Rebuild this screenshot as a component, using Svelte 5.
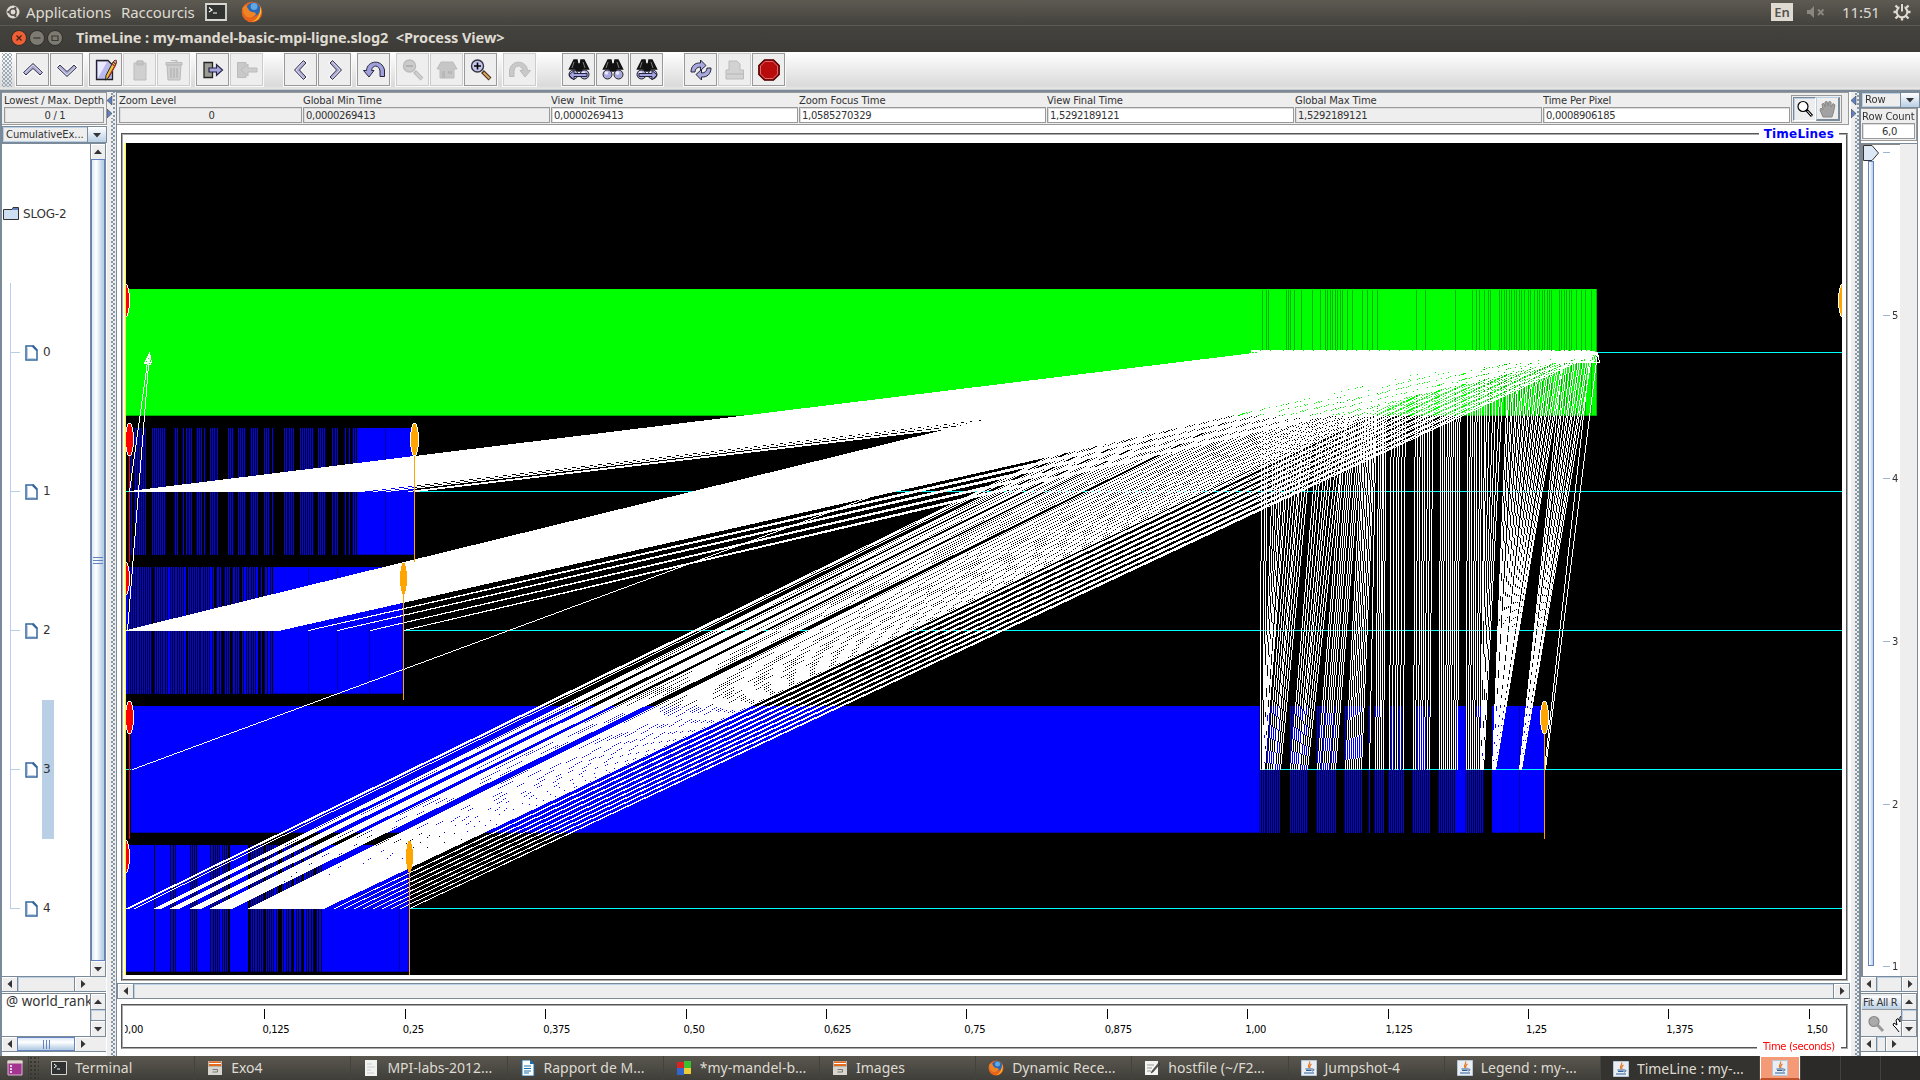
<script>
  import { onMount } from 'svelte';

  const OX = 125;
  const OY = 143;
  const W = 1717;
  const H = 832;
  let canvas;

  const tools = [
    { i: 'up' }, { i: 'down' }, { i: 'edit', g: 6 }, { i: 'paste', off: true, g: 1 }, { i: 'trash', off: true },
    { i: 'expand', g: 6 }, { i: 'collapse', off: true }, { i: 'left', g: 21 }, { i: 'right' },
    { i: 'undo', g: 6 }, { i: 'zoomout', off: true, g: 6 }, { i: 'home', off: true }, { i: 'zoomin' },
    { i: 'redo', off: true, g: 6 }, { i: 'findb', g: 26 }, { i: 'find' }, { i: 'findf' },
    { i: 'refresh', g: 21 }, { i: 'print', off: true }, { i: 'stop' }
  ];

  const fields = [
    { l: 'Zoom Level', v: '0', w: 183, ro: true, c: true },
    { l: 'Global Min Time', v: '0,0000269413', w: 247, ro: true },
    { l: 'View  Init Time', v: '0,0000269413', w: 247 },
    { l: 'Zoom Focus Time', v: '1,0585270329', w: 247 },
    { l: 'View Final Time', v: '1,5292189121', w: 247 },
    { l: 'Global Max Time', v: '1,5292189121', w: 247, ro: true },
    { l: 'Time Per Pixel', v: '0,0008906185', w: 247 }
  ];

  const axis = ['0,00', '0,125', '0,25', '0,375', '0,50', '0,625', '0,75', '0,875', '1,00', '1,125', '1,25', '1,375', '1,50'];
  const ranks = ['0', '1', '2', '3', '4'];
  const rows = ['', '5', '4', '3', '2', '1'];

  const tasks = [
    { i: 'term', t: 'Terminal' }, { i: 'files', t: 'Exo4' }, { i: 'doc', t: 'MPI-labs-2012...' },
    { i: 'writer', t: 'Rapport de M...' }, { i: 'blocks', t: '*my-mandel-b...' }, { i: 'files', t: 'Images' },
    { i: 'fox', t: 'Dynamic Rece...' }, { i: 'gedit', t: 'hostfile (~/F2...' }, { i: 'java', t: 'Jumpshot-4' },
    { i: 'java', t: 'Legend : my-...' }, { i: 'java', t: 'TimeLine : my-...', on: true }
  ];

  // [first start, last start, first end, last end, count] for messages leaving rank 3
  const groups3 = [
    [1260, 1263, 1261, 1268, 3], [1262, 1264, 1276, 1297, 7], [1267, 1280, 1300, 1320, 8], [1290, 1307, 1324, 1353, 10],
    [1317, 1335, 1350, 1368, 9], [1345, 1361, 1366, 1378, 9], [1369, 1369, 1377, 1377, 1], [1375, 1383, 1379, 1386, 5],
    [1389, 1403, 1391, 1405, 6], [1413, 1429, 1415, 1433, 8], [1439, 1457, 1440, 1460, 10], [1466, 1480, 1467, 1485, 8],
    [1480, 1483, 1487, 1504, 6], [1492, 1495, 1508, 1565, 24], [1519, 1521, 1563, 1592, 12], [1544, 1545, 1590, 1597, 2]
  ];

  // [first start, last start, count] for messages leaving rank 4
  const groups4 = [[126, 128, 3], [134, 135, 1], [154, 160, 5], [170, 178, 7], [190, 200, 8], [210, 231, 15], [248, 323, 48]];

  onMount(() => {
    const ctx = canvas.getContext('2d');
    const img = ctx.createImageData(W, H);
    const buf = new Uint32Array(img.data.buffer);
    const rgb = (r, g, b) => ((255 << 24) | (b << 16) | (g << 8) | r) >>> 0;
    const BLACK = rgb(0, 0, 0), WHITE = rgb(255, 255, 255), GREEN = rgb(0, 255, 0), DGREEN = rgb(0, 178, 0);
    const BLUE = rgb(0, 0, 255), DBLUE = rgb(0, 0, 178), CYAN = rgb(0, 255, 255);
    const RED = rgb(255, 0, 0), ORANGE = rgb(255, 165, 0);
    buf.fill(BLACK);

    const dot = (x, y, c) => {
      x -= OX; y -= OY;
      if (x >= 0 && y >= 0 && x < W && y < H) buf[y * W + x] = c;
    };
    const rect = (x, y, w, h, c) => {
      for (let j = y; j < y + h; j++) for (let i = x; i < x + w; i++) dot(i, j, c);
    };
    const line = (x0, y0, x1, y1, c = WHITE) => {
      x0 = Math.round(x0); x1 = Math.round(x1); y0 = Math.round(y0); y1 = Math.round(y1);
      const dx = Math.abs(x1 - x0), dy = -Math.abs(y1 - y0);
      const sx = x0 < x1 ? 1 : -1, sy = y0 < y1 ? 1 : -1;
      let e = dx + dy;
      for (;;) {
        dot(x0, y0, c);
        if (x0 === x1 && y0 === y1) break;
        const e2 = 2 * e;
        if (e2 >= dy) { e += dy; x0 += sx; }
        if (e2 <= dx) { e += dx; y0 += sy; }
      }
    };
    const arrow = (x0, y0, x1, y1) => {
      line(x0, y0, x1, y1);
      const a = Math.atan2(y1 - y0, x1 - x0);
      const bx = x1 - 10 * Math.cos(a), by = y1 - 10 * Math.sin(a);
      const px = -3 * Math.sin(a), py = 3 * Math.cos(a);
      line(x1, y1, bx + px, by + py);
      line(x1, y1, bx - px, by - py);
      line(bx + px, by + py, bx - px, by - py);
    };
    const oval = (cx, cy, c, ring = true) => {
      for (let j = -16; j <= 16; j++) {
        const o = Math.round(4 * Math.sqrt(Math.max(0, 1 - (j * j) / 272)));
        const n = Math.min(3, o - 1);
        if (ring) for (let i = -o; i <= o; i++) dot(cx + i, cy + j, WHITE);
        if (Math.abs(j) < 16) for (let i = -n; i <= n; i++) dot(cx + i, cy + j, c);
      }
    };
    const bar = (x, y, w, c, d) => {
      rect(x, y, w, 127, c);
      rect(x, y + 126, w, 1, d);
      rect(x + w - 1, y, 1, 127, d);
    };

    for (const y of [352, 491, 630, 769, 908]) rect(OX, y, W, 1, CYAN);

    // rank 0
    bar(126, 289, 1471, GREEN, DGREEN);
    for (const v of [187, 199, 205, 259, 265, 271, 283, 304, 337, 361, 376, 382, 391, 397, 406, 412, 421, 427, 442, 457,
      487, 502, 517, 532, 649, 676, 766, 817, 829, 838, 853, 865, 871, 898, 904, 913, 919, 928, 934, 943, 949, 958, 964,
      973, 985, 991, 1003, 1012, 1018, 1027, 1033, 1042, 1048, 1054, 1078, 1084, 1093, 1099, 1108, 1114, 1129, 1144, 1156, 1174])
      rect(1200 + Math.floor(v / 3), 290, 1, 126, DGREEN);

    // rank 1
    for (const v of [394, 405, 411, 418, 424, 430, 436, 457, 463, 469, 475, 481, 487, 493, 526, 532, 550, 560, 568, 574,
      592, 598, 604, 613, 631, 637, 643, 652, 685, 691, 697, 715, 721, 727, 733, 754, 760, 766, 772, 793, 799, 805, 817,
      853, 859, 868, 874, 880, 901, 907, 913, 919, 925, 931, 937, 955, 961, 967, 973, 997, 1006, 1012, 1036, 1048, 1060, 1066])
      rect(Math.floor(v / 3), 428, 1, 127, BLUE);
    bar(357, 428, 58, BLUE, DBLUE);
    rect(385, 429, 1, 126, DBLUE);

    // rank 2
    rect(126, 567, 148, 127, BLUE);
    for (let x = 128, k = 0; x < 274; x += k % 7 === 4 || (k % 5 === 1 && x > 155) ? 3 : 2, k++) rect(x, 567, 1, 127, BLACK);
    for (const x of [152, 186, 199, 214, 222, 231, 239, 258, 262]) rect(x, 567, 2, 127, BLACK);
    bar(274, 567, 130, BLUE, DBLUE);
    for (const x of [308, 337, 369]) rect(x, 568, 1, 126, DBLUE);

    // rank 3
    bar(131, 706, 1129, BLUE, DBLUE);
    for (const [a, b] of groups3) for (let x = a; x <= b; x += 2) if (x < 1492) rect(x, 706, 1, 127, BLUE);
    for (const [a, b] of [[1456, 1466], [1492, 1520], [1520, 1545]]) bar(a, 706, b - a, BLUE, DBLUE);
    rect(1493, 769, 51, 1, CYAN);

    // rank 4
    bar(126, 845, 284, BLUE, DBLUE);
    const cuts = [463, 512, 519, 525, 570, 578, 584, 590, 632, 640, 646, 652, 658, 667, 673, 679, 685, 688, 745, 751, 757, 763,
      772, 778, 784, 790, 796, 802];
    for (let v = 808; v <= 964; v += v % 5 === 0 ? 9 : 6) cuts.push(v);
    for (const v of cuts) rect(Math.floor(v / 3), 845, 1, 127, BLACK);
    for (const x of [249, 263, 279, 291, 302, 314]) rect(x, 845, 2, 127, BLACK);
    rect(399, 846, 1, 126, DBLUE);

    // marker stems
    rect(129, 456, 1, 106, RED);
    rect(129, 733, 1, 106, RED);

    // messages from rank 1
    for (let k = 0; k < 92; k++) arrow(129 + (231 * k) / 91, 491, 1261 + (301 * k) / 91, 352);
    for (const [a, b] of [[373, 1575], [386, 1585], [408, 1592], [415, 1597]]) {
      arrow(a, 491, b, 352);
      arrow(a, 491, b - 4, 352);
    }

    // messages from rank 2
    for (let k = 0; k < 84; k++) arrow(126 + (152 * k) / 83, 630, 1261 + (248 * k) / 83, 352);
    for (const [a, b] of [[308, 1530], [337, 1552], [370, 1575], [403, 1597]])
      for (const d of [0, 5, 10, 15]) arrow(a, 630, b - d, 352);

    // messages from rank 3
    arrow(132, 769, 1261, 352);
    for (const [a, b, c, d, n] of groups3)
      for (let k = 0; k < n; k++) {
        const t = n > 1 ? k / (n - 1) : 0;
        arrow(a + (b - a) * t, 769, c + (d - c) * t, 352);
      }

    // messages from rank 4
    const s4 = [];
    for (const [a, b, n] of groups4) for (let k = 0; k < n; k++) s4.push(n > 1 ? a + ((b - a) * k) / (n - 1) : a);
    s4.forEach((x, k) => arrow(x, 908, 1261 + (236 * k) / (s4.length - 1), 352));
    [334, 344, 354, 363, 373, 382, 391, 400, 409].forEach((x, k) => {
      for (const d of [0, 3, 6]) arrow(x, 908, 1505 + 11.5 * k - d, 352);
    });

    // start-up messages
    arrow(129, 491, 148, 354);
    arrow(127, 630, 149, 352);

    rect(414, 455, 1, 107, ORANGE);
    rect(403, 594, 1, 106, ORANGE);
    rect(1544, 733, 1, 106, ORANGE);
    rect(409, 872, 1, 103, ORANGE);
    oval(125, 300, RED);
    oval(129, 439, RED);
    oval(125, 578, RED);
    oval(129, 717, RED);
    oval(125, 856, RED);
    oval(1842, 300, ORANGE);
    oval(414, 439, ORANGE);
    oval(403, 578, ORANGE, false);
    oval(1544, 717, ORANGE);
    oval(409, 856, ORANGE, false);
    rect(125, 143, 1, 832, rgb(255, 255, 0));
    ctx.putImageData(img, 0, 0);
  });
</script>

{#snippet tri(dir)}
  <svg class="tri {dir}" viewBox="0 0 8 8"><path d="M0 6L4 1.5L8 6Z" fill="#333" /></svg>
{/snippet}

{#snippet sbtn(dir)}
  <span class="sbtn">{@render tri(dir)}</span>
{/snippet}

{#snippet tool(i)}
  <svg viewBox="0 0 22 22" width="22" height="22">
    {#if i === 'up' || i === 'down' || i === 'left' || i === 'right'}
      <g class="rot-{i}">
        <path d="M1.5 14L11 5L20.5 14L18 16.500L11 10L4 16.500Z" fill="#a9a9d4" stroke="#fff" stroke-width="2" />
        <path d="M1.500 13.500L11 4.500L20.500 13.500L18 16L11 9.500L4 16Z" fill="#a9a9d0" stroke="#33334a" />
        <path d="M3 13.500L11 6L19 13.500" fill="none" stroke="#dcdcf2" />
      </g>
    {:else if i === 'edit'}
      <path d="M1.500 1.500H13L17.500 6V20.500H1.500Z" fill="#b9b9ee" stroke="#222" stroke-width="1.300" />
      <path d="M3 19L3 3H12Z" fill="#e9e9ff" />
      <path d="M18 3L21 5L14 18L10.500 21L11 16.500Z" fill="#e8c53a" stroke="#222" />
      <path d="M17 5L20 7L13.500 18" fill="none" stroke="#b03030" stroke-width="1.300" />
      <path d="M18 3L21 5L22 2L20 1Z" fill="#e09090" stroke="#633" />
    {:else if i === 'paste'}
      <path d="M5 4H8V2H14V4H17V21H5Z" fill="#cfcfcf" stroke="#bdbdbd" /><path d="M7 5H15M8 2H14V6H8Z" stroke="#bbb" fill="#c6c6c6" />
    {:else if i === 'trash'}
      <path d="M4 6H18L17 21H5ZM3 3.500H19V6H3ZM8 1.500H14V3" fill="#cfcfcf" stroke="#bbb" />
      <path d="M8 9V19M11 9V19M14 9V19" stroke="#aaa" />
    {:else if i === 'expand'}
      <path d="M2 3.500H10.500V18.500H2Z" fill="#9c9c94" stroke="#222" stroke-width="1.300" />
      <path d="M7 9H14.500V5.500L20.500 11L14.500 16.500V13H7Z" fill="#a6a6dc" stroke="#222244" stroke-width="1.200" />
    {:else if i === 'collapse'}
      <path d="M1.500 3.500H10V18.500H1.500Z" fill="#c9c9c9" stroke="#bbb" />
      <path d="M21 9H12V5L5 11L12 17V13H21Z" fill="#cdcdcd" stroke="#bbb" />
    {:else if i === 'undo' || i === 'redo'}
      <g class={i === 'redo' ? 'mirror' : ''}>
        <path d="M0.500 11.500H3.500C4 1.500 19 -0.500 21.500 11V17.500H17V12C16 5.500 9.500 5.500 8.500 11.500H11L6 18Z"
          fill={i === 'redo' ? '#c9c9c9' : '#a0a0dc'} stroke={i === 'redo' ? '#bbb' : '#26263a'} />
      </g>
    {:else if i === 'zoomout' || i === 'zoomin'}
      <path d="M12.500 12.500L20 20" stroke={i === 'zoomin' ? '#4a3218' : '#bbb'} stroke-width="4" />
      <path d="M13.500 13.500L19.500 19.500" stroke={i === 'zoomin' ? '#dba868' : '#d0d0d0'} stroke-width="1.800" />
      <circle cx="7.500" cy="7" r="6" fill={i === 'zoomin' ? '#c5c5ee' : '#ccc'} stroke={i === 'zoomin' ? '#333344' : '#bbb'} stroke-width="1.400" />
      <path d={i === 'zoomin' ? 'M4 7H11M7.500 3.500V10.500' : 'M4 7H11'} stroke={i === 'zoomin' ? '#000' : '#aaa'} stroke-width="1.600" />
    {:else if i === 'home'}
      <path d="M1 10L5 3H17L21 10H18V19H4V10Z" fill="#c6c6c6" stroke="#bcbcbc" /><path d="M6 12H9V19H6ZM12 12H16V15H12Z" fill="#b8b8b8" />
    {:else if i === 'find' || i === 'findb' || i === 'findf'}
      <path d="M6 1H9L10.500 10H1.500ZM13 1H16L20.500 10H11.500ZM8 5H14V12H8Z" fill="#161616" stroke="#111" stroke-width="1.500" />
      <path d="M6 3L4 9M15 3L17 9" stroke="#777" />
      <circle cx="5.500" cy="15.500" r="4.500" fill="#a8a8dc" stroke="#222" /><circle cx="16.500" cy="15.500" r="4.500" fill="#a8a8dc" stroke="#222" />
      <circle cx="4.500" cy="14" r="1.800" fill="#e8e8ff" /><circle cx="15.500" cy="14" r="1.800" fill="#e8e8ff" />
      {#if i !== 'find'}
        <path class={i === 'findf' ? 'mirror' : ''} d="M1 16L6 11.500V14.500H19V17.500H6V21Z" fill="#a3a3e0" stroke="#22223c" />
      {/if}
    {:else if i === 'refresh'}
      <path d="M1 13C1 7 5 3.500 10.500 4V1L16 6.500L10.500 11.500V8C7 8 5 10 5 13Z" fill="#a9a9dd" stroke="#26263a" />
      <path d="M21 9C21 15 17 18.500 11.500 18V21L6 15.500L11.500 10.500V14C15 14 17 12 17 9Z" fill="#a9a9dd" stroke="#26263a" />
    {:else if i === 'print'}
      <path d="M5 11V2H13L16 5V11H19.500V20H2V11Z" fill="#d2d2d2" stroke="#bbb" /><path d="M3 15H19" stroke="#b5b5b5" />
    {:else}
      <path d="M6.500 0.800H15.500L21.200 6.500V15.500L15.500 21.200H6.500L0.800 15.500V6.500Z" fill="#b80c0c" stroke="#4a0000" stroke-width="1.300" />
      <path d="M7 2.500H15L19.500 7V15L15 19.500H7L2.500 15V7Z" fill="none" stroke="#dd6a6a" />
    {/if}
  </svg>
{/snippet}

{#snippet app(i)}
  <svg viewBox="0 0 16 16" width="16" height="16">
    {#if i === 'term'}
      <path d="M0.500 1.500H15.500V14.500H0.500Z" fill="#2f3230" stroke="#d5d5d0" /><path d="M3 4L5.500 6L3 8M6 9H9" fill="none" stroke="#fff" />
    {:else if i === 'files'}
      <path d="M1 1H15V15H1Z" fill="#b9b5ab" /><path d="M2 1.500H14V6H2Z" fill="#e46a1c" /><path d="M2 3.500H14" stroke="#fff" />
      <path d="M1 7H15V15H1Z" fill="#d8d5ce" /><path d="M5.500 9.500H10.500V12H5.500" fill="none" stroke="#777" />
    {:else if i === 'doc'}
      <path d="M2 0H14V16H2Z" fill="#f2f2f0" /><path d="M4 4H9M4 7H12M4 10H8M4 13H11" stroke="#ccc" />
    {:else if i === 'writer'}
      <path d="M2 0H10L14 4V16H2Z" fill="#fff" stroke="#1b6fae" /><path d="M10 0V4H14Z" fill="#1b6fae" />
      <path d="M4 6H11M4 8.500H11M4 11H11M4 13H9" stroke="#1b6fae" />
    {:else if i === 'blocks'}
      <path d="M1 2H8V8H1Z" fill="#d22" /><path d="M8 1H15V8H8Z" fill="#38c030" /><path d="M1 8H8V15H1Z" fill="#36c" /><path d="M8 8H15V14H8Z" fill="#ec3" />
    {:else if i === 'fox'}
      <circle cx="8" cy="8" r="7.500" fill="#e8641b" /><circle cx="9" cy="6" r="5" fill="#2a66b4" /><circle cx="9.500" cy="4" r="2.500" fill="#5fa8e0" />
      <path d="M1 5C2 12 6 13 9 11C12 10 11 8 8 8C5 7 5 4 3 3Z" fill="#f08424" /><path d="M14 4C16 9 13 15 8 15C13 13 14 9 14 4Z" fill="#fbc52b" />
    {:else if i === 'gedit'}
      <path d="M1 1H14V15H1Z" fill="#f4f4f2" /><path d="M3 5H10M3 8H8M3 11H7" stroke="#999" /><path d="M14.500 3L8 11L7 13L9 12L16 4Z" fill="#555" stroke="#222" stroke-width=".5" />
    {:else}
      <path d="M0.500 0.500H15.500V15.500H0.500Z" fill="#e9eef4" stroke="#b9c6d6" />
      <path d="M8.500 1.500C10 4 5.500 5 8 8M10.500 4C8 5.500 8.500 6.500 9 8" fill="none" stroke="#e8771f" stroke-width="1.200" />
      <path d="M4.500 9H11.500M5 10.500H10.500M3 13H13M11.500 9C14 9 13 11 11 11" fill="none" stroke="#2f5f96" />
    {/if}
  </svg>
{/snippet}

<div class="screen">
  <header class="panel">
    <svg class="logo" viewBox="0 0 14 14"><circle cx="7" cy="7" r="6.500" fill="#dfdbd2" /><circle cx="7" cy="7" r="3.200" fill="none" stroke="#55534c" stroke-width="1.500" /><circle cx="2.500" cy="7" r="1.200" fill="#55534c" /><circle cx="9.300" cy="3" r="1.200" fill="#55534c" /><circle cx="9.300" cy="11" r="1.200" fill="#55534c" /></svg>
    <span class="apps">Applications</span>
    <span class="racc">Raccourcis</span>
    <svg class="pterm" viewBox="0 0 22 18"><path d="M1 1H21V17H1Z" fill="#30332f" stroke="#d8d8d4" stroke-width="1.800" /><path d="M4 4.500L7 7L4 9M8 10H12" fill="none" stroke="#fff" stroke-width="1.200" /></svg>
    <span class="pfox">{@render app('fox')}</span>
    <span class="grow"></span>
    <span class="kbd">En</span>
    <svg class="vol" viewBox="0 0 18 12"><path d="M0 4H3L7 0V12L3 8H0Z" fill="#8b887f" /><path d="M11 3.500L16.500 9M16.500 3.500L11 9" stroke="#8b887f" stroke-width="1.800" /></svg>
    <span class="clock">11:51</span>
    <svg class="gear" viewBox="0 0 18 18"><circle cx="9" cy="9" r="5.300" fill="none" stroke="#dfdbd2" stroke-width="2" /><path d="M2.500 2.500L5 5M15.500 2.500L13 5M2.500 15.500L5 13M15.500 15.500L13 13M0.500 9H3.500M14.500 9H17.500M9 14.500V17.500" stroke="#dfdbd2" stroke-width="2.400" /><path d="M6.500 0H11.500V8H6.500Z" fill="#4e4c46" /><path d="M9 1V8.500" stroke="#dfdbd2" stroke-width="2" /></svg>
  </header>

  <div class="title">
    <svg class="wins" viewBox="0 0 52 16">
      <circle cx="8" cy="8" r="7.500" fill="#ee5f35" stroke="#2f2e2a" /><path d="M5.500 5.500L10.500 10.500M10.500 5.500L5.500 10.500" stroke="#4b2314" stroke-width="1.300" />
      <circle cx="26" cy="8" r="7.500" fill="#7c7a71" stroke="#2f2e2a" /><path d="M22.500 8H29.500" stroke="#3a3934" stroke-width="1.300" />
      <circle cx="44" cy="8" r="7.500" fill="#7c7a71" stroke="#2f2e2a" /><path d="M41 6H47V10.500H41Z" fill="none" stroke="#3a3934" stroke-width="1.200" />
    </svg>
    <span class="tt">TimeLine : my-mandel-basic-mpi-ligne.slog2&nbsp; &lt;Process View&gt;</span>
  </div>

  <div class="toolbar">
    <span class="grip"></span>
    {#each tools as t}
      <span class="tb g{t.g ?? 1}" class:off={t.off}>{@render tool(t.i)}</span>
    {/each}
  </div>

  <main>
    <section class="left">
      <div class="box">
        <span class="lab">Lowest / Max. Depth</span>
        <span class="fld ro mid">0 / 1</span>
      </div>
      <div class="combo"><span class="ctext">CumulativeEx...</span><span class="cbtn">{@render tri('d')}</span></div>
      <div class="pane lp">
        <div class="tree">
          <div class="node root">
            <svg viewBox="0 0 16 13" width="16" height="13"><path d="M0.500 2.500H9L10 0.500H15.500V12.500H0.500Z" fill="#cfe0f2" stroke="#333" /><path d="M10 1H15V3H9Z" fill="#6382bf" /></svg>
            <span>SLOG-2</span>
          </div>
          {#each ranks as r}
            <div class="node leaf" class:last={r === '4'}>
              <i class="vert"></i><i class="tick"></i>
              <svg viewBox="0 0 13 16" width="13" height="16"><path d="M1 1H8.500L12 5V15H1Z" fill="#fff" stroke="#35679c" stroke-width="1.500" /><path d="M2.500 2.500V13.500H10.500" fill="none" stroke="#b8cfe5" /><path d="M7.500 1L12 5.500" stroke="#35679c" stroke-width="1.800" /></svg>
              <span class="num" class:sel={r === '3'}>{r}</span>
            </div>
          {/each}
        </div>
        <div class="vs">{@render sbtn('u')}<span class="thumb v"><i></i><i></i><i></i></span>{@render sbtn('d')}</div>
      </div>
      <div class="hs short">{@render sbtn('l')}<span class="track"></span>{@render sbtn('r')}</div>
      <div class="pane2 lp">
        <div class="wr">@ world_rank</div>
        <div class="vs">{@render sbtn('u')}<span class="track v"></span>{@render sbtn('d')}</div>
      </div>
      <div class="hs short">{@render sbtn('l')}<span class="thumb h"><i></i><i></i><i></i></span>{@render sbtn('r')}</div>
    </section>

    <div class="split first"><svg viewBox="0 0 6 22"><path d="M5 0V9L0 4.500Z" fill="#6382bf" stroke="#333" stroke-width=".5" /><path d="M0 13V22L5 17.500Z" fill="#6382bf" stroke="#333" stroke-width=".5" /></svg></div>

    <section class="center">
      <div class="times">
        {#each fields as f}
          <div class="tf" style:width="{f.w}px">
            <span class="lab">{f.l}</span>
            <span class="fld" class:ro={f.ro} class:mid={f.c}>{f.v}</span>
          </div>
        {/each}
        <div class="modes">
          <span class="m on"><svg viewBox="0 0 18 18"><circle cx="7" cy="6.500" r="5" fill="#fff" stroke="#000" stroke-width="1.200" /><path d="M10.500 10L16 16" stroke="#000" stroke-width="3" /><path d="M11.500 11L15.500 15.500" stroke="#fff" /></svg></span>
          <span class="m"><svg viewBox="0 0 18 18"><path d="M4 17L1 10L2 8L4 10L3 4L5 3.500L6 7L6 2L8 1.500L9 6L10 1.500L12 2L12 7L14 3.500L16 5L14.500 12L13 17Z" fill="#a2a2a2" stroke="#888" /></svg></span>
        </div>
      </div>
      <fieldset class="plot">
        <legend>TimeLines</legend>
        <canvas bind:this={canvas} width={W} height={H}></canvas>
      </fieldset>
      <div class="hs wide">{@render sbtn('l')}<span class="track"></span>{@render sbtn('r')}</div>
      <div class="axis">
        <div class="ticks">
          {#each axis as a, n}
            <div class="tk"><i class:hide={n === 0}></i><span>{a}</span></div>
          {/each}
        </div>
        <span class="unit">Time (seconds)</span>
      </div>
    </section>

    <div class="split"><svg viewBox="0 0 6 22"><path d="M5 0V9L0 4.500Z" fill="#6382bf" stroke="#333" stroke-width=".5" /><path d="M0 13V22L5 17.500Z" fill="#6382bf" stroke="#333" stroke-width=".5" /></svg></div>

    <section class="right">
      <div class="combo rc"><span class="ctext">Row</span><span class="cbtn">{@render tri('d')}</span></div>
      <div class="box rbox">
        <span class="lab">Row Count</span>
        <span class="fld mid">6,0</span>
      </div>
      <div class="slide">
        <div class="sl">
          <div class="rail">
            <svg viewBox="0 0 16 16" width="16" height="16"><path d="M0.500 0.500H9L15.500 8L9 15.500H0.500Z" fill="#dce8f5" stroke="#333" /></svg>
            <span class="bar"></span>
          </div>
          <div class="marks">
            {#each rows as r}<div class="mk"><i></i>{r}</div>{/each}
          </div>
        </div>
      </div>
      <div class="hs rh">{@render sbtn('l')}<span class="track"></span>{@render sbtn('r')}</div>
      <div class="pane2 rp">
        <div class="fit">
          <span class="fb">Fit All R</span>
          <span class="fi">
            <svg viewBox="0 0 18 18" width="18" height="18"><circle cx="7" cy="6.500" r="5" fill="#aaa" stroke="#888" stroke-width="1.200" /><path d="M10.500 10L16 16" stroke="#999" stroke-width="3" /></svg>
            <svg class="hand" viewBox="0 0 10 18" width="10" height="18"><path d="M7 17L4 13L1 10L2 8L5 10L4 5L6 3.500L8 7L8 2L10 1" fill="#fff" stroke="#000" /></svg>
          </span>
        </div>
        <div class="vs">{@render sbtn('u')}<span class="track v"></span>{@render sbtn('d')}</div>
      </div>
      <div class="hs rs">{@render sbtn('l')}<span class="track"></span>{@render sbtn('r')}</div>
    </section>
  </main>

  <footer>
    <span class="desk"><svg viewBox="0 0 16 16" width="16" height="16"><path d="M1 1H15V15H1Z" fill="#a3348f" stroke="#dcb4d4" /><path d="M0.500 0.500H15.500V3.500H0.500Z" fill="#dedacb" /><path d="M3 6H5M3 9H5M3 12H5" stroke="#fff" stroke-width="1.500" /></svg></span>
    <span class="fgrip"></span>
    {#each tasks as t}
      <span class="task" class:on={t.on}>{@render app(t.i)}<b>{t.t}</b></span>
    {/each}
    <span class="ws cur">{@render app('java')}</span><span class="ws"></span><span class="ws"></span><span class="ws"></span>
  </footer>
</div>

<style>
  :global(body) { margin: 0; overflow: hidden; }
  .screen, .screen :global(*) { box-sizing: border-box; }
  .screen {
    width: 1920px; height: 1080px; display: flex; flex-direction: column; background: #eee; overflow: hidden;
    font: 10px/12px "DejaVu Sans", sans-serif; letter-spacing: -0.33px; color: #333; white-space: nowrap;
  }
  .screen svg { display: block; flex: none; }
  .grow { flex: 1; }

  .panel {
    height: 26px; display: flex; align-items: center; padding: 0 7px 2px 6px; background: linear-gradient(#5d5a52, #45433e 24px);
    border-bottom: 1px solid #5c5b53; color: #dfdbd2; font: 15px/22px "Noto Sans", sans-serif; letter-spacing: -0.1px;
  }
  .logo { width: 14px; height: 14px; margin-right: 6px; }
  .apps { width: 95px; }
  .racc { width: 84px; }
  .pterm { width: 22px; height: 18px; margin-right: 14px; }
  .pfox :global(svg) { width: 22px; height: 22px; }
  .kbd { width: 22px; height: 18px; margin-right: 14px; background: #dfdbd2; color: #55534c; font-size: 13px; font-weight: 600; line-height: 19px; text-align: center; }
  .vol { width: 18px; height: 12px; margin-right: 17px; }
  .clock { width: 51px; }
  .gear { width: 18px; height: 18px; margin-right: 2px; }

  .title {
    height: 26px; display: flex; align-items: center; padding-left: 11px; padding-bottom: 2px;
    background: linear-gradient(#45433e, #3c3b37); color: #dfdbd2;
  }
  .wins { width: 52px; height: 16px; margin-right: 13px; }
  .tt { margin-top: -2px; font: bold 14.500px/20px "Noto Sans", sans-serif; letter-spacing: -0.08px; }

  .toolbar {
    height: 38px; display: flex; align-items: flex-start; padding: 1px 0 0 2px; background: linear-gradient(#fff, #dadada 34px, #e8e8e8);
    border-bottom: 1px solid #ccc;
  }
  .grip { width: 10px; height: 34px; margin-right: 3px; background: radial-gradient(circle, #9aa8b5 0.700px, transparent 1px) 0 0 / 4px 4px, radial-gradient(circle, #9aa8b5 0.700px, transparent 1px) 2px 2px / 4px 4px; }
  .tb { width: 33px; height: 33px; display: flex; align-items: center; justify-content: center; background: #eee; border: 1px solid #999; outline: 1px solid #fafafa; }
  .tb.off { border-color: #ccc; }
  .g1 { margin-left: 1px; }
  .g6 { margin-left: 6px; }
  .g21 { margin-left: 21px; }
  .g26 { margin-left: 26px; }
  .rot-down { transform: rotate(180deg); transform-origin: 11px 11px; }
  .rot-left { transform: rotate(-90deg); transform-origin: 11px 11px; }
  .rot-right { transform: rotate(90deg); transform-origin: 11px 11px; }
  .mirror { transform: scaleX(-1); transform-origin: 11px 11px; }

  main { height: 966px; display: flex; border-top: 2px solid #7a8a99; background: #fff; border-left: 1px solid #7a8a99; }
  .left { width: 106px; display: flex; flex-direction: column; border-left: 1px solid #7a8a99; }
  .box { height: 33px; padding: 1px 2px 1px 2px; border: 1px solid #999; border-left: 0; background: #eee; display: flex; flex-direction: column; }
  .lab { height: 13px; line-height: 13px; overflow: hidden; white-space: pre; letter-spacing: -0.120px; }
  .fld { height: 16px; border: 1px solid #999; box-shadow: inset 1px 1px #ddd; background: #fff; padding-left: 2px; line-height: 15px; }
  .fld.ro { background: #eee; }
  .fld.mid { text-align: center; }
  .combo { height: 17px; margin-top: 1px; display: flex; border: 1px solid #7a8a99; background: #eee; box-shadow: inset 0 0 0 1px #b8cfe5; }
  .ctext { flex: 1; padding-left: 3px; line-height: 16px; letter-spacing: -0.080px; }
  .cbtn { width: 19px; display: flex; align-items: center; justify-content: center; border-left: 1px solid #7a8a99; background: linear-gradient(#fff, #b8cfe5); }
  .tri { width: 8px; height: 8px; }
  .tri.d { transform: rotate(180deg); }
  .tri.l { transform: rotate(-90deg); }
  .tri.r { transform: rotate(90deg); }
  .pane { height: 834px; display: flex; border-top: 1px solid #7a8a99; border-bottom: 1px solid #7a8a99; overflow: hidden; }
  .lp { margin-right: 1px; }
  .tree { flex: 1; font-size: 12px; letter-spacing: -0.200px; }
  .node { height: 139px; display: flex; align-items: center; padding-left: 1px; }
  .root { gap: 4px; }
  .leaf { padding-left: 8px; }
  .vert { width: 1px; height: 139px; background: #b8cfe5; }
  .last .vert { height: 70px; align-self: flex-start; }
  .tick { width: 9px; height: 1px; background: #b8cfe5; margin-right: 5px; }
  .num { width: 12px; height: 139px; line-height: 139px; margin-left: 4px; padding-left: 1px; }
  .num.sel { background: #b8cfe5; }
  .vs { width: 16px; display: flex; flex-direction: column; border-left: 1px solid #7a8a99; border-right: 1px solid #7a8a99; background: #eee; }
  .vs .sbtn { width: 100%; height: 15px; }
  .sbtn { width: 15px; display: flex; align-items: center; justify-content: center; background: #eee; box-shadow: inset 1px 1px #fff; flex: none; }
  .thumb { flex: 1; display: flex; align-items: center; justify-content: center; border: 1px solid #6382bf; gap: 2px; }
  .thumb.v { flex-direction: column; background: linear-gradient(90deg, #dce8f5, #fff 35%, #b8cfe5 90%); }
  .thumb.v i { width: 10px; height: 1px; background: #6382bf; }
  .thumb.h { background: linear-gradient(#dce8f5, #fff 35%, #b8cfe5 90%); }
  .thumb.h i { width: 1px; height: 9px; background: #6382bf; }
  .track { flex: 1; border: 1px solid #7a8a99; border-width: 0 1px; box-shadow: inset 1px 1px #b8cfe5; background: #eee; }
  .track.v { border-width: 1px 0; }
  .hs { display: flex; height: 15px; border-bottom: 1px solid #7a8a99; background: #eee; }
  .hs.short, .hs.rh { margin: 0 0 1px; }
  .hs.short { padding-right: 16px; margin-right: 1px; }
  .pane2 { height: 44px; display: flex; border-top: 1px solid #7a8a99; border-bottom: 1px solid #7a8a99; }
  .wr { flex: 1; width: 0; overflow: hidden; padding: 0 0 0 4px; font: 13.500px/15px "Noto Sans", sans-serif; letter-spacing: 0; }

  .split { width: 9px; border-right: 1px solid #7a8a99; background: radial-gradient(circle, #8796a5 0.700px, transparent 1px) 3px 0 / 4px 4px repeat-y, radial-gradient(circle, #8796a5 0.700px, transparent 1px) 5px 2px / 4px 4px repeat-y, #eee; }
  .split.first { width: 10px; }
  .split svg { width: 6px; height: 22px; margin-top: 4px; background: #eee; }

  .center { width: 1734px; display: flex; flex-direction: column; }
  .times { height: 33px; width: 1732px; display: flex; gap: 1px; padding: 1px 0 0 2px; border: 1px solid #999; border-left: 0; background: #eee; }
  .tf { display: flex; flex-direction: column; }
  .modes { width: 51px; height: 28px; margin-top: 1px; display: flex; border: 1px solid #999; padding: 1px; }
  .m { flex: 1; display: flex; align-items: center; justify-content: center; border: 1px solid #b8cfe5; border-right: 2px solid #7a8a99; border-bottom: 2px solid #7a8a99; }
  .m.on { border: 1px solid #7a8a99; border-right-color: #fff; border-bottom-color: #fff; box-shadow: inset 1px 1px #b8cfe5; }
  .m svg { width: 18px; height: 18px; }
  .plot { margin: 2px 0 0 4px; padding: 0 4px 4px 2px; border: 2px groove #aaa; width: 1727px; height: 854px; min-width: 0; }
  .plot legend { margin-left: auto; margin-right: 3px; padding: 0 5px; height: 14px; font: bold 12px/14px "DejaVu Sans", sans-serif; letter-spacing: 0.200px; color: #00f; }
  .plot canvas { display: block; margin-top: 2px; background: #000; }
  .hs.wide { width: 1733px; height: 16px; margin-top: 2px; border: 1px solid #7a8a99; }
  .axis { margin: 5px 0 0 4px; width: 1727px; height: 45px; border: 2px groove #aaa; padding-left: 2px; }
  .ticks { display: flex; overflow: hidden; width: 1717px; height: 33px; color: #000; }
  .tk { width: 140.400px; flex: none; padding-top: 3px; }
  .tk:first-child { margin-left: -3px; }
  .tk i { display: block; width: 1px; height: 10px; margin: 0 0 5px 2px; background: #000; }
  .tk i.hide { visibility: hidden; }
  .tk span { display: block; }
  .unit { display: block; width: 84px; margin: 2px 0 0 1632px; padding-left: 6px; color: #f00; background: #fff; }

  .right { width: 58px; display: flex; flex-direction: column; border-left: 1px solid #7a8a99; border-right: 1px solid #7a8a99; }
  .rc { height: 16px; margin: 0 -3px 0 0; }
  .rc .ctext { line-height: 14px; }
  .rbox { height: 33px; margin-top: 0; padding: 1px 1px; }
  .slide { margin-top: 2px; height: 834px; border: 1px solid #7a8a99; border-right: 0; background: #eee; }
  .sl { width: 38px; height: 832px; background: #fff; display: flex; border-left: 1px solid #888; border-top: 1px solid #888; }
  .rail { width: 18px; padding-top: 0; }
  .bar { display: block; width: 6px; height: 805px; margin-left: 5px; border: 1px solid #6382bf; background: linear-gradient(90deg, #fff, #b8cfe5); }
  .marks { padding-top: 2px; margin-left: 2px; }
  .mk { height: 162.900px; display: flex; align-items: flex-start; }
  .mk i { width: 7px; height: 1px; background: #9cb6d2; margin: 5px 2px 0 0; }
  .rs { padding-right: 16px; }
  .fit { flex: 1; width: 0; overflow: hidden; padding: 2px 0 0 1px; background: #eee; }
  .fb { display: block; height: 14px; line-height: 14px; padding-left: 1px; background: linear-gradient(#fff, #b8cfe5); border-bottom: 1px solid #999; letter-spacing: -0.350px; }
  .fi { display: flex; align-items: center; gap: 7px; padding: 5px 0 0 5px; }

  footer { height: 24px; display: flex; background: linear-gradient(#5a574f, #3f3e39); color: #dfdbd2; font: 14px/22px "Noto Sans", sans-serif; letter-spacing: 0; }
  .desk { width: 29px; padding: 4px 0 0 7px; border-right: 1px solid #3e3d38; }
  .fgrip { width: 10px; background: radial-gradient(circle, #36352f 0.700px, transparent 1px) 0 0 / 4px 4px; }
  .task { width: 156.200px; flex: none; display: flex; align-items: center; gap: 8px; padding-left: 12px; border-right: 1px solid #44423d; }
  .task b { font-weight: normal; }
  .task.on { width: 159px; background: #34332f; padding-top: 2px; }
  .ws { width: 40px; flex: none; background: #2b2a28; border-left: 1px solid #44423d; }
  .ws.cur { background: #f59a77; border: 1px solid #fff; border-bottom: 2px solid #c0532c; display: flex; justify-content: center; padding-top: 3px; }
</style>
